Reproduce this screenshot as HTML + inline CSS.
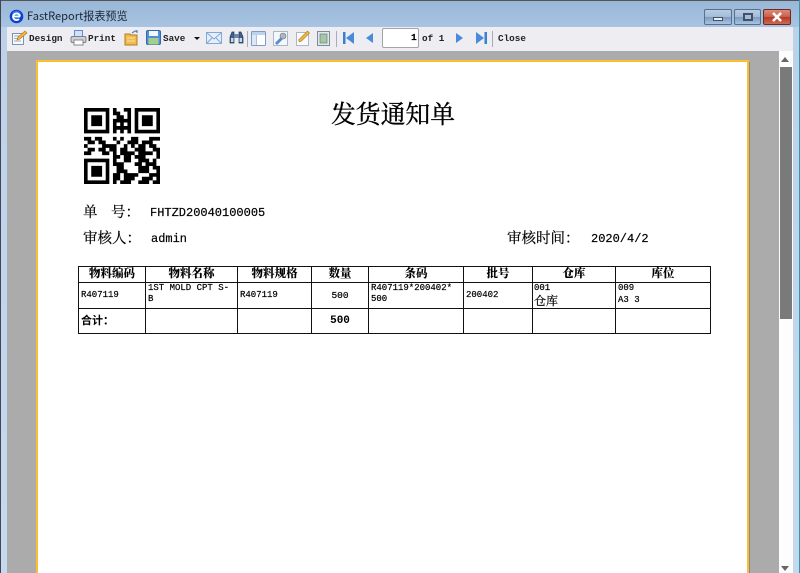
<!DOCTYPE html>
<html>
<head>
<meta charset="utf-8">
<style>
html,body{margin:0;padding:0;width:800px;height:573px;overflow:hidden;background:#fff}
*{box-sizing:border-box}
.a{position:absolute}
.t{position:absolute;white-space:pre;line-height:1}
.m{font-family:"Liberation Mono","Noto Serif CJK SC",monospace;color:#000;-webkit-text-stroke:.2px #000}
.tb{font-size:9.3px;font-weight:bold;color:#222;-webkit-text-stroke:0}
.s{font-family:"Liberation Serif","Noto Serif CJK SC",serif;color:#000;-webkit-text-stroke:.2px #000}
.h{font-family:"Noto Serif CJK SC",serif;font-weight:900;font-size:11.5px;color:#000;text-align:center}
.c{font-size:9px;color:#000}
.z{font-family:"Noto Sans CJK SC",sans-serif}
</style>
</head>
<body>
<div class="a" style="left:0;top:0;width:800px;height:573px;background:linear-gradient(#98b6d7 0,#a9c4e2 27px,#bcd2ea 27px,#c5d9ee 100%)"></div>
<div class="a" style="left:0;top:0;width:800px;height:1px;background:#555"></div>
<div class="a" style="left:0;top:0;width:1px;height:573px;background:#445"></div>
<div class="a" style="left:799px;top:0;width:1px;height:573px;background:#39a"></div>
<svg class="a" style="left:9px;top:9px" width="15" height="15" viewBox="0 0 15 15"><circle cx="7.5" cy="7.5" r="6.8" fill="#0a3fd0"/><circle cx="7.5" cy="6" r="4.4" fill="#5aa0f0" opacity=".55"/><path d="M4 7.5h7M11 7.5a3.5 3.3 0 1 0-1 2.6" fill="none" stroke="#fff" stroke-width="1.8"/></svg>
<div class="t z" style="left:27px;top:11px;font-size:11.1px;color:#1a2635">FastReport报表预览</div>

<!-- window buttons -->
<div class="a" style="left:704px;top:9px;width:28px;height:16px;border:1px solid #56708e;border-radius:2px;background:linear-gradient(#b7cce4 0,#a5bcd8 48%,#7e9cc0 52%,#a9c3e0 100%)"></div>
<div class="a" style="left:713px;top:17px;width:10px;height:4px;background:#e8eef5;border:1px solid #3f5268"></div>
<div class="a" style="left:734px;top:9px;width:27px;height:16px;border:1px solid #56708e;border-radius:2px;background:linear-gradient(#b7cce4 0,#a5bcd8 48%,#7e9cc0 52%,#a9c3e0 100%)"></div>
<div class="a" style="left:743px;top:13px;width:10px;height:8px;border:2px solid #3f5268;background:#a5bcd8"></div>
<div class="a" style="left:763px;top:9px;width:28px;height:16px;border:1px solid #6d2a20;border-radius:2px;background:linear-gradient(#dc8a78 0,#c9604e 48%,#b23a26 52%,#cf6a50 100%)"></div>
<svg class="a" style="left:771px;top:11px" width="12" height="12" viewBox="0 0 12 12"><path d="M2 2l8 8M10 2l-8 8" stroke="#fff" stroke-width="2.6"/></svg>

<!-- toolbar -->
<div class="a" style="left:7px;top:27px;width:786px;height:24px;background:#eeeef2"></div>
<!-- design -->
<svg class="a" style="left:11px;top:29px" width="17" height="17" viewBox="0 0 17 17"><rect x="1.5" y="4.5" width="11" height="11" fill="#fbfbff" stroke="#7b93b5"/><path d="M3 7h7M3 9.5h6M3 12h7" stroke="#9ab" /><path d="M6 11l1-3 7-6 2 2-7 6z" fill="#f3b53c" stroke="#a8761d" stroke-width=".6"/></svg>
<div class="t m tb" style="left:29px;top:33.5px">Design</div>
<!-- print -->
<svg class="a" style="left:70px;top:29px" width="17" height="17" viewBox="0 0 17 17"><path d="M4.5 8V1.5h8V8z" fill="#cfe2f8" stroke="#5b8fd0"/><rect x="1" y="7.5" width="15" height="6" rx="1.5" fill="#cdd0d6" stroke="#7d8188"/><rect x="4" y="11" width="9" height="5" fill="#fff" stroke="#888"/></svg>
<div class="t m tb" style="left:88px;top:33.5px">Print</div>
<!-- open -->
<svg class="a" style="left:124px;top:29px" width="16" height="17" viewBox="0 0 16 17"><path d="M1 5h5l1 1h6v10H1z" fill="#f0bc52" stroke="#b47a1c"/><path d="M3 9h8M3 12h8" stroke="#fbe09c"/><path d="M8 4l3-2 2 .5M13 1v3" fill="none" stroke="#5a82b5" stroke-width="1.2"/></svg>
<!-- save -->
<svg class="a" style="left:146px;top:30px" width="15" height="15" viewBox="0 0 15 15"><rect x=".5" y=".5" width="14" height="14" rx="1.5" fill="#4f8fdc" stroke="#3568aa"/><rect x="3" y="1" width="9" height="5" fill="#f4f8fc"/><rect x="2.5" y="8" width="10" height="6.5" fill="#a5d08c"/></svg>
<div class="t m tb" style="left:163px;top:33.5px">Save</div>
<div class="a" style="left:194px;top:37px;width:0;height:0;border:3px solid transparent;border-top:3px solid #111"></div>
<!-- mail -->
<svg class="a" style="left:206px;top:32px" width="16" height="12" viewBox="0 0 16 12"><rect x=".5" y=".5" width="15" height="11" fill="#e4effb" stroke="#82a8d8"/><path d="M1 1l7 6 7-6M1 11l5-5M15 11l-5-5" fill="none" stroke="#82a8d8"/></svg>
<!-- find -->
<svg class="a" style="left:229px;top:30px" width="15" height="14" viewBox="0 0 15 14"><path d="M1 13V7l2-5h2v11zM14 13V7l-2-5h-2v11z" fill="#40608c" stroke="#25395a" stroke-width=".7"/><rect x="5" y="4" width="5" height="4" fill="#6b86ad"/><rect x="2" y="8" width="2.5" height="4" fill="#c9d8ec"/><rect x="10.5" y="8" width="2.5" height="4" fill="#c9d8ec"/></svg>
<div class="a" style="left:247px;top:31px;width:1px;height:16px;background:#aab"></div>
<!-- outline -->
<svg class="a" style="left:251px;top:31px" width="15" height="15" viewBox="0 0 15 15"><rect x=".5" y=".5" width="14" height="14" rx="1" fill="#fff" stroke="#7a9cc8"/><rect x="1" y="1" width="13" height="3" fill="#bcd3ee"/><path d="M5.5 4v10" stroke="#7a9cc8"/><rect x="1" y="4" width="4.5" height="10" fill="#dbe8f6"/></svg>
<!-- wrench -->
<svg class="a" style="left:273px;top:31px" width="15" height="15" viewBox="0 0 15 15"><rect x=".5" y=".5" width="14" height="14" fill="#f4f7fb" stroke="#a9b7c9"/><path d="M3 13l6-6" stroke="#5b8ccc" stroke-width="3"/><circle cx="10" cy="5" r="3" fill="#aeb6c2" stroke="#6f7886" stroke-width=".6"/></svg>
<!-- edit -->
<svg class="a" style="left:295px;top:30px" width="16" height="16" viewBox="0 0 16 16"><rect x="1.5" y="2.5" width="12" height="13" fill="#fbfbfd" stroke="#a9b7c9"/><path d="M3.5 10l1 2 2-1 8-8-2-2z" fill="#f2b53f" stroke="#aa7b22" stroke-width=".6"/></svg>
<!-- page setup -->
<svg class="a" style="left:317px;top:31px" width="13" height="15" viewBox="0 0 13 15"><rect x=".5" y=".5" width="12" height="14" fill="#e0e7ef" stroke="#7c8a9a"/><rect x="3" y="3" width="7" height="9" fill="#a9c4a8" stroke="#5e8a68" stroke-width=".7"/></svg>
<div class="a" style="left:336px;top:31px;width:1px;height:16px;background:#aab"></div>
<!-- nav -->
<svg class="a" style="left:343px;top:31px" width="12" height="14" viewBox="0 0 12 14"><rect x="0" y="1" width="2.5" height="12" fill="#3f7fd0"/><path d="M11 1v12L3 7z" fill="#4a8ada"/></svg>
<svg class="a" style="left:365px;top:31px" width="9" height="14" viewBox="0 0 9 14"><path d="M8 2v10L1 7z" fill="#4a8ada"/></svg>
<div class="a" style="left:382px;top:28px;width:37px;height:20px;background:#fff;border:1px solid #a4a4a4;border-radius:2px"></div>
<div class="t m" style="left:411px;top:33px;font-size:9.5px;font-weight:bold">1</div>
<div class="t m tb" style="left:422px;top:33.5px">of 1</div>
<svg class="a" style="left:455px;top:31px" width="9" height="14" viewBox="0 0 9 14"><path d="M1 2v10L8 7z" fill="#4a8ada"/></svg>
<svg class="a" style="left:475px;top:31px" width="12" height="14" viewBox="0 0 12 14"><path d="M1 1v12L9 7z" fill="#4a8ada"/><rect x="9.5" y="1" width="2.5" height="12" fill="#3f7fd0"/></svg>
<div class="a" style="left:492px;top:31px;width:1px;height:16px;background:#aab"></div>
<div class="t m tb" style="left:498px;top:33.5px">Close</div>

<!-- workspace -->
<div class="a" style="left:7px;top:51px;width:772px;height:522px;background:#ababab"></div>
<div class="a" style="left:36px;top:60px;width:713px;height:513px;background:#fff;border:2px solid #fdbf2d;border-bottom:0"></div>
<div class="a" style="left:749px;top:62px;width:1px;height:511px;background:#8a8a8a"></div>

<!-- scrollbar -->
<div class="a" style="left:779px;top:51px;width:14px;height:522px;background:#fdfdfd"></div>
<div class="a" style="left:781px;top:57px;width:0;height:0;border:4px solid transparent;border-bottom:5px solid #666;border-top:0"></div>
<div class="a" style="left:780px;top:67px;width:12px;height:252px;background:#7a7a7a"></div>
<div class="a" style="left:781px;top:566px;width:0;height:0;border:4px solid transparent;border-top:5px solid #666;border-bottom:0"></div>

<!-- header -->
<div class="t" style="left:331px;top:101px;font-family:'Noto Serif CJK SC',serif;font-size:24.8px;color:#000;-webkit-text-stroke:.35px #000">发货通知单</div>

<!-- QR -->
<svg class="a" style="left:84px;top:108px" width="76" height="76" viewBox="0 0 21 21">
<path fill="#000" fill-rule="evenodd" d="M0 0h7v7H0zM1 1v5h5V1zM2 2h3v3H2zM14 0h7v7h-7zM15 1v5h5V1zM16 2h3v3h-3zM0 14h7v7H0zM1 15v5h5v-5zM2 16h3v3H2z"/>
<path stroke="#000" stroke-width="1.02" fill="none" d="M8 .5h1m2 0h2M8 1.5h2M12 1.5h1M9 2.5h2m1 0h1M8 3.5h5M8 4.5h1m1 0h1m1 0h1M8 5.5h5M8 6.5h1m1 0h1m1 0h1
M0 8.5h2m1 0h2m3 0h1m1 0h1m2 0h2m3 0h3
M1 9.5h2m1 0h2m3 0h1m2 0h3m1 0h3
M0 10.5h1m4 0h4m2 0h1m1 0h1m1 0h2m1 0h2
M1 11.5h2m1 0h2m1 0h2m1 0h2m2 0h3m2 0h2
M0 12.5h2m3 0h2m1 0h1m1 0h4m1 0h4m1 0h1
M8 13.5h2m1 0h2m1 0h3m3 0h1
M8 14.5h1m2 0h2m2 0h3m1 0h1
M8 15.5h3m3 0h2m1 0h3
M9 16.5h2m4 0h3m1 0h2
M9 17.5h3m3 0h3m2 0h1
M8 18.5h2m1 0h4m3 0h3
M8 19.5h2m1 0h3m2 0h3m1 0h1
M8 20.5h1m1 0h3m2 0h3m1 0h2"/>
</svg>

<!-- info -->
<div class="t s" style="left:83px;top:205.5px;font-size:14.5px">单</div>
<div class="t s" style="left:111px;top:205.5px;font-size:14.5px">号：</div>
<div class="t m" style="left:150px;top:207px;font-size:12px">FHTZD20040100005</div>
<div class="t s" style="left:83px;top:231.5px;font-size:14.5px">审核人：</div>
<div class="t m" style="left:151px;top:233px;font-size:12px">admin</div>
<div class="t s" style="left:507px;top:231.5px;font-size:14.5px">审核时间：</div>
<div class="t m" style="left:591px;top:233px;font-size:12px">2020/4/2</div>

<!-- table lines -->
<svg class="a" style="left:78px;top:266px" width="634" height="68" shape-rendering="crispEdges">
<path d="M0 .5H633M0 16.5H633M0 42.5H633M0 67.5H633M.5 0V68M67.5 0V68M159.5 0V68M233.5 0V68M290.5 0V68M385.5 0V68M454.5 0V68M537.5 0V68M632.5 0V68" stroke="#111" fill="none"/>
</svg>
<div class="t h" style="left:79px;top:268px;width:66px">物料编码</div>
<div class="t h" style="left:146px;top:268px;width:91px">物料名称</div>
<div class="t h" style="left:238px;top:268px;width:73px">物料规格</div>
<div class="t h" style="left:312px;top:268px;width:56px">数量</div>
<div class="t h" style="left:369px;top:268px;width:94px">条码</div>
<div class="t h" style="left:464px;top:268px;width:68px">批号</div>
<div class="t h" style="left:533px;top:268px;width:82px">仓库</div>
<div class="t h" style="left:616px;top:268px;width:94px">库位</div>

<div class="t m c" style="left:81px;top:291px">R407119</div>
<div class="t m c" style="left:148px;top:284px">1ST MOLD CPT S-</div>
<div class="t m c" style="left:148px;top:295px">B</div>
<div class="t m c" style="left:240px;top:291px">R407119</div>
<div class="t m c" style="left:312px;top:291px;width:56px;text-align:center;font-size:9.5px">500</div>
<div class="t m c" style="left:371px;top:284px">R407119*200402*</div>
<div class="t m c" style="left:371px;top:295px">500</div>
<div class="t m c" style="left:466px;top:291px">200402</div>
<div class="t m c" style="left:534px;top:284px">001</div>
<div class="t s" style="left:534px;top:295px;font-size:12px">仓库</div>
<div class="t m c" style="left:618px;top:284px">009</div>
<div class="t m c" style="left:618px;top:296px">A3 3</div>
<div class="t" style="left:81px;top:315px;font-family:'Noto Sans CJK SC',sans-serif;font-weight:700;font-size:11px;color:#000">合计：</div>
<div class="t" style="left:312px;top:316px;width:56px;text-align:center;font-family:'Liberation Mono',monospace;font-weight:bold;font-size:11px;color:#000">500</div>
</body>
</html>
